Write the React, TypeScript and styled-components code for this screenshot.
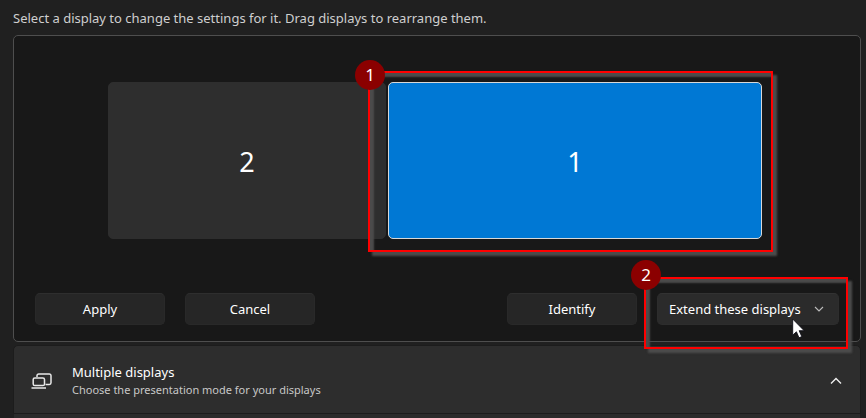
import React from "react";
import styled, { createGlobalStyle } from "styled-components";

const GlobalStyle = createGlobalStyle`
  *, *::before, *::after { box-sizing: border-box; }
  html, body { height: 100%; }
  body {
    margin: 0;
    background: #202020;
    color: #fff;
    font-family: "Noto Sans", "Open Sans", sans-serif;
    font-size: 13px;
    line-height: 20px;
  }
  button, select { font: inherit; color: inherit; }
`;

const Page = styled.main`
  display: flex;
  flex-direction: column;
  min-height: 100vh;
  padding: 8px 5px 0 13px;
`;

const Hint = styled.p`
  margin: 0 0 7px;
  color: #cfcfcf;
`;

const Panel = styled.section`
  border: 1px solid #4e4e4e;
  border-radius: 5px;
  background: #181818;
  padding: 46px 21px 16px;
`;

const Arrangement = styled.div`
  display: grid;
  grid-template-columns: 278fr 374fr;
  gap: 2px;
  padding: 0 77px 0 73px;
`;

const Marked = styled.div`
  position: relative;
  display: grid;
`;

const Monitor = styled.button<{ $selected?: boolean }>`
  height: 157px;
  padding: 2px 0 0;
  border: 1px solid ${(p) => (p.$selected ? "#d8d8d8" : "#2e2e2e")};
  border-radius: 5px;
  background: ${(p) => (p.$selected ? "#0078d4" : "#2e2e2e")};
  font-size: 27px;
  line-height: 32px;
`;

const Actions = styled.div`
  display: flex;
  gap: 20px;
  margin-top: 54px;
`;

const ActionButton = styled.button<{ $pushed?: boolean }>`
  width: 130px;
  height: 32px;
  padding: 0;
  margin-left: ${(p) => (p.$pushed ? "auto" : "0")};
  border: 1px solid #292929;
  border-top-color: #2e2e2e;
  border-radius: 5px;
  background: #262626;
`;

const ModeSelect = styled.select`
  appearance: none;
  width: 182px;
  height: 32px;
  padding: 0 36px 0 11px;
  border: 1px solid #2d2d2d;
  border-top-color: #323232;
  border-radius: 5px;
  background: #2b2b2b;
`;

const SelectArrow = styled.svg`
  position: absolute;
  right: 15px;
  top: 13px;
  pointer-events: none;
`;

const Pointer = styled.svg`
  position: absolute;
  left: 135px;
  top: 25px;
  z-index: 3;
  pointer-events: none;
`;

const Frame = styled.div<{ $inset: string }>`
  position: absolute;
  inset: ${(p) => p.$inset};
  z-index: 1;
  border: 2px solid #ff0000;
  box-shadow: 4px 4px 2px #4b4b4b, inset 4px 4px 2px #4b4b4b;
  pointer-events: none;
`;

const Badge = styled.span<{ $rise: number }>`
  position: absolute;
  left: -15px;
  top: ${(p) => -p.$rise}px;
  width: 30px;
  height: 30px;
  border-radius: 50%;
  background: #8b0000;
  font-size: 17px;
  line-height: 30px;
  text-align: center;
`;

const SettingRow = styled.button`
  display: flex;
  align-items: center;
  width: 100%;
  height: 69px;
  margin-top: 3px;
  padding: 2px 18px 0 17px;
  border: 1px solid #1c1c1c;
  border-radius: 5px 5px 0 0;
  background: #2d2d2d;
  text-align: left;
`;

const RowText = styled.span`
  display: grid;
  flex: 1;
  margin-left: 19px;
`;

const RowTitle = styled.span`
  line-height: 18px;
`;

const RowDetail = styled.span`
  color: #c8c8c8;
  font-size: 11px;
  line-height: 18px;
`;

const NextRow = styled.div`
  flex: 1;
  margin: 0 1px;
  background: #2b2b2b;
`;

function DisplaysIcon() {
  return (
    <svg width="22" height="18" viewBox="0 0 22 18" fill="none" stroke="#e8e8e8" strokeWidth="1.5" aria-hidden="true">
      <path d="M6 5V3.7A1.7 1.7 0 0 1 7.7 2H18.3A1.7 1.7 0 0 1 20 3.7V10.8A1.7 1.7 0 0 1 18.3 12.5H14.5" />
      <rect x="2.2" y="6" width="11.3" height="7.5" rx="1.6" />
      <path d="M.5 16H15" />
    </svg>
  );
}

export default function App() {
  return (
    <>
      <GlobalStyle />
      <Page>
        <Hint>Select a display to change the settings for it. Drag displays to rearrange them.</Hint>
        <Panel>
          <Arrangement>
            <Monitor type="button">2</Monitor>
            <Marked>
              <Monitor type="button" $selected aria-pressed="true">1</Monitor>
              <Frame $inset="-11px -11px -13px -20px">
                <Badge $rise={13}>1</Badge>
              </Frame>
            </Marked>
          </Arrangement>
          <Actions>
            <ActionButton type="button">Apply</ActionButton>
            <ActionButton type="button">Cancel</ActionButton>
            <ActionButton type="button" $pushed>Identify</ActionButton>
            <Marked>
              <ModeSelect aria-label="Presentation mode" defaultValue="extend">
                <option value="extend">Extend these displays</option>
              </ModeSelect>
              <SelectArrow width="10" height="7" viewBox="0 0 10 7" fill="none" stroke="#bdbdbd" strokeWidth="1.1" aria-hidden="true">
                <path d="M1 1L5 5L9 1" />
              </SelectArrow>
              <Frame $inset="-16px -9px -24px -13px">
                <Badge $rise={19}>2</Badge>
              </Frame>
              <Pointer width="13" height="21" viewBox="0 0 13 21" aria-hidden="true">
                <path d="M.7 1V17.2L4.4 13.8L7 19.8L9.8 18.6L7.2 12.7H12.2Z" fill="#fff" stroke="#101018" strokeWidth=".9" />
              </Pointer>
            </Marked>
          </Actions>
        </Panel>
        <SettingRow type="button" aria-expanded="true">
          <DisplaysIcon />
          <RowText>
            <RowTitle>Multiple displays</RowTitle>
            <RowDetail>Choose the presentation mode for your displays</RowDetail>
          </RowText>
          <svg width="12" height="8" viewBox="0 0 12 8" fill="none" stroke="#f0f0f0" strokeWidth="1.4" aria-hidden="true">
            <path d="M1 6.5L6 1.5L11 6.5" />
          </svg>
        </SettingRow>
        <NextRow />
      </Page>
    </>
  );
}
